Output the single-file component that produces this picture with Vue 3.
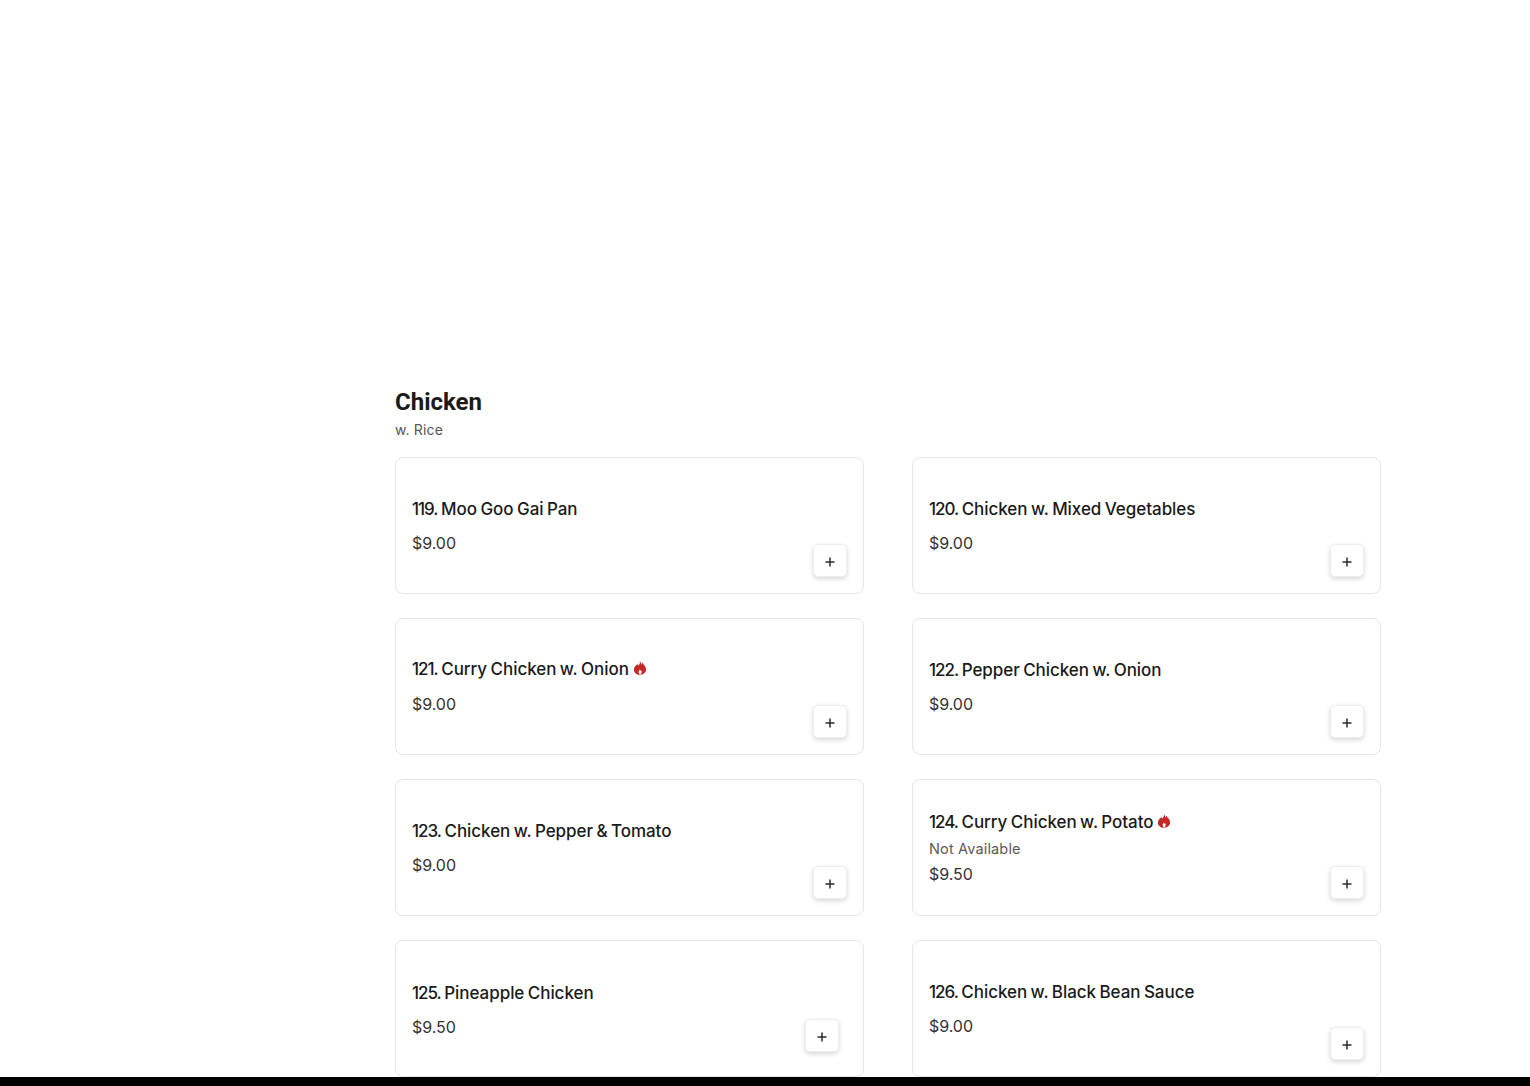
<script setup>
const items = [
  { num: '119.', name: 'Moo Goo Gai Pan', price: '$9.00' },
  { num: '120.', name: 'Chicken w. Mixed Vegetables', price: '$9.00' },
  { num: '121.', name: 'Curry Chicken w. Onion', price: '$9.00', hot: true },
  { num: '122.', name: 'Pepper Chicken w. Onion', price: '$9.00' },
  { num: '123.', name: 'Chicken w. Pepper & Tomato', price: '$9.00' },
  { num: '124.', name: 'Curry Chicken w. Potato', price: '$9.50', hot: true, note: 'Not Available' },
  { num: '125.', name: 'Pineapple Chicken', price: '$9.50', shifted: true },
  { num: '126.', name: 'Chicken w. Black Bean Sauce', price: '$9.00' },
]
</script>

<template>
  <div class="page">
    <section class="section">
      <h2 class="heading">Chicken</h2>
      <p class="sub">w. Rice</p>
      <div class="grid">
        <article v-for="item in items" :key="item.num" class="card" :class="{ 'card-low': item.shifted }">
          <div class="title" :class="{ 'title-hot': item.hot && !item.note }">
            <span><span class="num">{{ item.num }}</span> {{ item.name }}</span>
            <svg v-if="item.hot" class="flame" viewBox="0 0 14 14" aria-hidden="true">
              <path fill-rule="evenodd" d="M6.900.300c.4 2.100-.8 3.300-1.500 4.300-.5-.5-.8-1-.9-1.700C2.600 4.300.900 6.300.900 8.700c0 2.900 2.500 5 5.800 5 .2 0 .5 0 .7 0 3.200-.2 5.700-2.300 5.700-5.200 0-3.300-2.900-4.500-3.600-6.900-.5.600-.8 1.300-.8 2.100C8.100 2.800 7.900 1.300 6.900.300zM7.300 13.500c-1.100-.5-1.700-1.400-1.600-2.400.1-1 .7-1.600 1.200-2.500.4.400.7.900.7 1.400.3-.1.500-.4.700-.8.400.6.500 1.200.4 1.900-.1.900-.6 1.700-1.400 2.400z" fill="#c62828"/>
            </svg>
          </div>
          <div v-if="item.note" class="note">{{ item.note }}</div>
          <div class="price" :class="{ 'with-note': item.note }">{{ item.price }}</div>
          <button class="add" :class="{ shifted: item.shifted }" type="button" aria-label="Add">
            <svg viewBox="0 0 12 12" class="plus" aria-hidden="true">
              <path d="M6 1.500v9M1.500 6h9" stroke="#2b2b2b" stroke-width="1.500" fill="none"/>
            </svg>
          </button>
        </article>
      </div>
    </section>
    <div class="bar"></div>
  </div>
</template>

<style>
html, body { margin: 0; background: #fff; overflow: hidden; }
</style>

<style scoped>
.page {
  height: 1086px;
  position: relative;
  overflow: hidden;
  background: #fff;
  font-family: Inter, "Open Sans", sans-serif;
}
.section {
  width: 986px;
  margin-left: 395px;
  padding-top: 387px;
}
.heading {
  margin: 0;
  font: 700 24px/30px Roboto, sans-serif;
  color: #1a1a1a;
}
.sub {
  margin: 3px 0 0;
  font-size: 14px;
  letter-spacing: .15px;
  line-height: 20px;
  color: #555;
}
.grid {
  display: grid;
  grid-template-columns: 469px 469px;
  column-gap: 48px;
  row-gap: 24px;
  margin-top: 17px;
}
.card {
  position: relative;
  box-sizing: border-box;
  height: 137px;
  padding: 0 16px;
  border: 1px solid #e6e6e6;
  border-radius: 8px;
  display: flex;
  flex-direction: column;
  justify-content: center;
}
.card-low { padding-top: 2px; }
.title {
  box-sizing: border-box;
  height: 24px;
  padding-top: 1px;
  display: flex;
  align-items: center;
  gap: 4px;
  font-size: 17px;
  font-weight: 500;
  letter-spacing: -.05px;
  word-spacing: -1px;
  line-height: 22px;
  white-space: nowrap;
  color: #1a1a1a;
}
.num { letter-spacing: -1px; }
.title-hot { padding-top: 0; margin-bottom: 1px; }
.flame { width: 14px; height: 14px; margin-top: -2px; }
.note {
  margin-top: 6px;
  font-size: 14.500px;
  letter-spacing: .15px;
  line-height: 20px;
  color: #5a5a5a;
}
.price {
  margin-top: 10px;
  font-size: 16px;
  letter-spacing: -.05px;
  line-height: 24px;
  color: #333;
}
.price.with-note { margin-top: 3px; }
.add {
  position: absolute;
  right: 16px;
  bottom: 16px;
  width: 34px;
  height: 33px;
  padding: 2px 0 0;
  border: 1px solid #eee;
  border-radius: 5px;
  background: #fff;
  box-shadow: 0 2px 5px rgba(0, 0, 0, .16);
  display: flex;
  align-items: center;
  justify-content: center;
}
.add.shifted { right: 24px; bottom: 24px; }
.plus { width: 12px; height: 12px; }
.bar {
  position: absolute;
  left: 0;
  right: 0;
  bottom: 0;
  height: 9px;
  background: #000;
}
</style>
